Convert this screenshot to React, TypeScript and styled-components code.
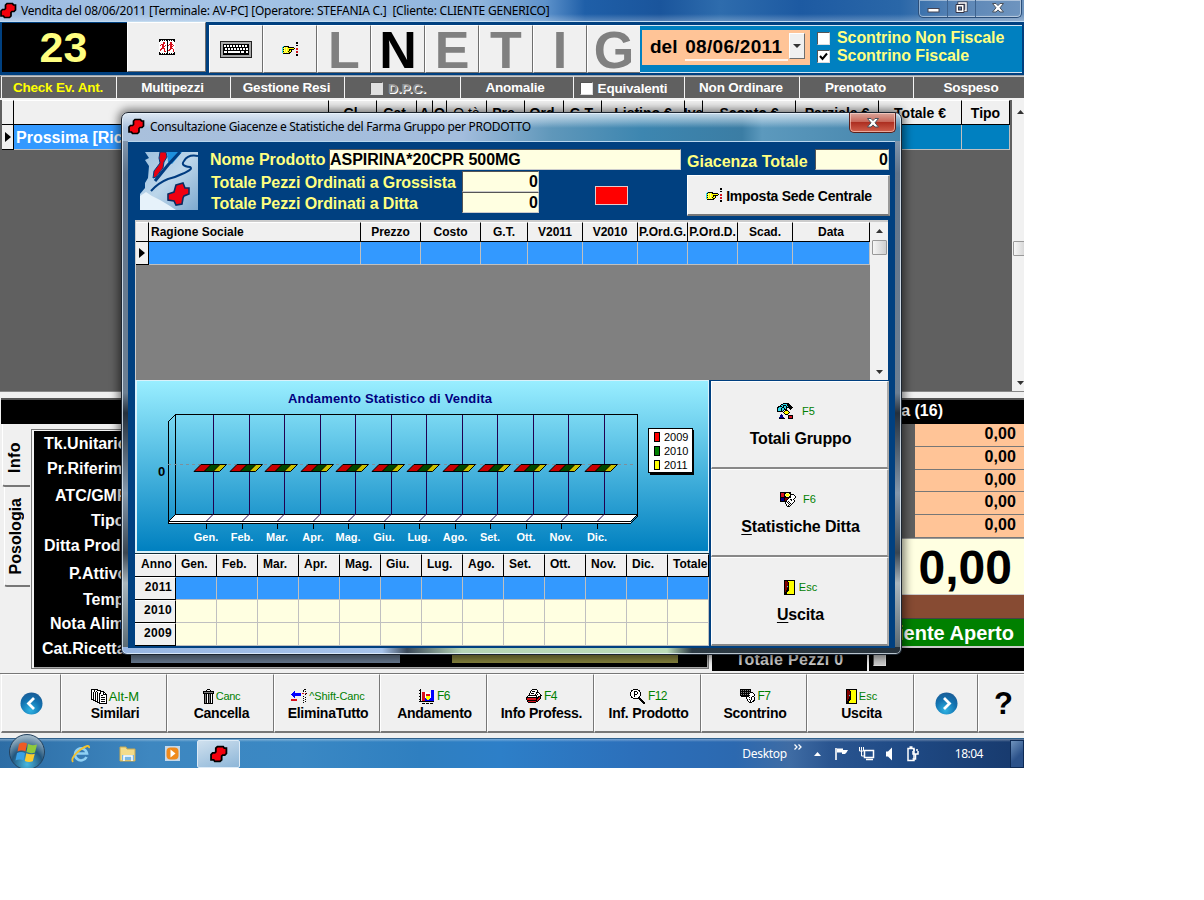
import React from "react";
import styled, { createGlobalStyle, css } from "styled-components";

const Global = createGlobalStyle`
  * { box-sizing: border-box; }
  body { margin: 0; background: #fff; font-family: "Liberation Sans", Arial, sans-serif; }
`;

/* ---------- shared ---------- */
const Text = styled.span<{ $s?: number; $c?: string; $ls?: number; $b?: boolean; $lh?: number }>`
  font-size: ${(p) => p.$s ?? 16}px;
  line-height: ${(p) => p.$lh ?? (p.$s ?? 16) + 2}px;
  color: ${(p) => p.$c ?? "#000"};
  letter-spacing: ${(p) => p.$ls ?? 0}px;
  font-weight: ${(p) => (p.$b === false ? 400 : 700)};
  white-space: pre;
`;
const UiText = styled(Text)`
  font-family: "Noto Sans", "Open Sans", sans-serif;
`;
const Embossed = styled(Text)`
  text-shadow: 1px 1px 0 #fff;
`;
const raised = css`
  background: #f0f0f0;
  border: 1px solid;
  border-color: #fff #6e6e6e #6e6e6e #fff;
`;

const Screen = styled.div`
  position: relative;
  width: 1024px;
  height: 768px;
  overflow: hidden;
  display: flex;
  flex-direction: column;
  background: #f0f0f0;
`;

/* ---------- main title bar ---------- */
const TitleBar = styled.header`
  height: 22px;
  flex: none;
  display: flex;
  align-items: flex-start;
  justify-content: space-between;
  border-bottom: 1px solid #c3dcf0;
  background:
    linear-gradient(180deg, rgba(255,255,255,0) 14px, rgba(255,255,255,.25) 21px),
    linear-gradient(90deg, #9dbbe0 0, #a5c4e6 230px, #8fb4dc 480px, #5d92cb 545px, #1f5fa8 585px, #1a559c 660px, #2e6cad 720px, #1d5aa2 800px, #2a67a8 900px, #5c86b6 960px, #6f95bf 1024px);
`;
const TitleLeft = styled.div`
  display: flex;
  gap: 4px;
  padding: 2px 0 0 0;
  svg { flex: none; }
  span { display: block; padding-top: 2px; }
`;
const WinButtons = styled.div`
  display: flex;
  width: 104px;
  height: 18px;
  margin-right: 2px;
  border: 1px solid #2c4f7a;
  border-top: 0;
  border-radius: 0 0 5px 5px;
  box-shadow: inset 0 0 0 1px rgba(255, 255, 255, 0.45);
`;
const WinButton = styled.div<{ $w: number }>`
  width: ${(p) => p.$w}px;
  display: flex;
  justify-content: center;
  & + & { border-left: 1px solid #3d628e; }
`;

/* ---------- toolbar ---------- */
const Toolbar = styled.div`
  height: 53px;
  flex: none;
  display: flex;
  align-items: flex-start;
  background: #004080;
  padding: 1px 0 0 2px;
`;
const Counter = styled.div`
  width: 125px;
  height: 49px;
  background: #000;
  display: flex;
  justify-content: center;
  align-items: center;
  padding-right: 2px;
`;
const ToolButton = styled.button<{ $w: number; $h?: number; $mt?: number; $ml?: number }>`
  ${raised}
  width: ${(p) => p.$w}px;
  height: ${(p) => p.$h ?? 48}px;
  margin: ${(p) => p.$mt ?? 2}px 0 0 ${(p) => p.$ml ?? 0}px;
  padding: 0;
  display: flex;
  flex: none;
  align-items: center;
  justify-content: center;
  font-family: inherit;
`;
const LetterButton = styled(ToolButton)`
  padding-top: 2px;
`;
const ReceiptPanel = styled.div`
  width: 382px;
  height: 48px;
  margin: 2px 0 0 -1px;
  background: #0080c0;
  border-top: 1px solid #d4e6f2;
  border-bottom: 1px solid #d4e6f2;
  display: flex;
`;
const DateBox = styled.div`
  width: 168px;
  height: 35px;
  margin: 4px 0 0 2px;
  background: #ffc497;
  display: flex;
  padding: 3px 5px 0 8px;
  justify-content: space-between;
`;
const DateValue = styled.div`
  width: 103px;
  margin-left: 7px;
  height: 28px;
  border-bottom: 2px solid #fff3ea;
`;
const ComboArrow = styled.div`
  ${raised}
  width: 16px;
  flex: none;
  height: 26px;
  display: flex;
  align-items: center;
  justify-content: center;
`;
const Checks = styled.div`
  margin: 3px 0 0 7px;
  display: flex;
  flex-direction: column;
`;
const CheckRow = styled.label`
  display: flex;
  height: 18px;
  gap: 7px;
  align-items: center;
`;
const Box = styled.span<{ $bg?: string }>`
  width: 13px;
  height: 13px;
  flex: none;
  display: block;
  background: ${(p) => p.$bg ?? "#fff"};
  border: 1px solid;
  border-color: #555 #ddd #ddd #555;
  svg { display: block; }
`;

/* ---------- filter bar ---------- */
const FilterBar = styled.nav`
  height: 25px;
  flex: none;
  display: flex;
  padding-left: 1px;
  background: #606060;
  border-top: 1px solid #9aa4ae;
  border-bottom: 2px solid #f2f2f2;
`;
const FilterCell = styled.div<{ $w: number; $pt?: number; $pr?: number }>`
  width: ${(p) => p.$w}px;
  flex: none;
  display: flex;
  gap: 5px;
  align-items: center;
  justify-content: center;
  padding-top: ${(p) => p.$pt ?? 0}px;
  padding-right: ${(p) => p.$pr ?? 2}px;
  border-left: 1px solid #f4f4f4;
  border-top: 1px solid #ccc;
`;

/* ---------- sales grid ---------- */
const SalesGrid = styled.section`
  height: 291px;
  flex: none;
  display: flex;
  background: #606060;
  padding-left: 2px;
`;
const SalesBody = styled.div`
  width: 1010px;
  flex: none;
`;
const HeadRow = styled.div<{ $h: number }>`
  display: flex;
  height: ${(p) => p.$h}px;
`;
const HeadCell = styled.div<{ $w: number; $left?: boolean; $pb?: number }>`
  width: ${(p) => p.$w}px;
  flex: none;
  display: flex;
  align-items: center;
  justify-content: ${(p) => (p.$left ? "flex-start" : "center")};
  padding-left: ${(p) => (p.$left ? 2 : 0)}px;
  padding-bottom: ${(p) => p.$pb ?? 0}px;
  background: #f0f0f0;
  border-top: 1px solid #fff;
  border-right: 1px solid #000;
  border-bottom: 1px solid #000;
  overflow: hidden;
`;
const DataCell = styled.div<{ $w: number; $bg: string }>`
  width: ${(p) => p.$w}px;
  flex: none;
  display: flex;
  align-items: center;
  padding: 2px 0 0 2px;
  background: ${(p) => p.$bg};
  border-right: 1px solid #c0c0c0;
  border-bottom: 1px solid #c0c0c0;
  overflow: hidden;
`;
const Marker = styled.div<{ $w: number }>`
  width: ${(p) => p.$w}px;
  flex: none;
  display: flex;
  align-items: center;
  justify-content: center;
  background: #f0f0f0;
  border-right: 1px solid #000;
  border-bottom: 1px solid #000;
`;
const Scroll = styled.div<{ $w: number; $thumb: number; $top?: number }>`
  width: ${(p) => p.$w}px;
  flex: none;
  background: #f1f1f1;
  display: flex;
  flex-direction: column;
  align-items: center;
  justify-content: space-between;
  padding: ${(p) => p.$top ?? 7}px 0 6px;
  svg { display: block; flex: none; }
  i {
    width: 15px;
    height: 15px;
    margin-bottom: auto;
    margin-top: ${(p) => p.$thumb}px;
    border: 1px solid #999;
    border-radius: 1px;
    background: linear-gradient(90deg, #f6f6f6, #cfcfcf);
    flex: none;
  }
`;

/* ---------- lower area ---------- */
const Lower = styled.section`
  height: 282px;
  flex: none;
  display: flex;
  flex-direction: column;
  background: #f0f0f0;
  border-top: 1px solid #888;
`;
const BlackBar = styled.div`
  margin: 6px 0 0 1px;
  height: 26px;
  flex: none;
  background: #000;
  border-top: 2px solid #555;
  display: flex;
  justify-content: flex-end;
  align-items: center;
  padding: 0 81px 2px 0;
`;
const LowerBody = styled.div`
  display: flex;
  height: 248px;
`;
const Tabs = styled.div`
  width: 30px;
  flex: none;
  display: flex;
  flex-direction: column;
  padding-left: 2px;
`;
const Tab = styled.div<{ $h: number; $ml?: number; $pt?: number }>`
  height: ${(p) => p.$h}px;
  margin-left: ${(p) => p.$ml ?? 0}px;
  padding: ${(p) => p.$pt ?? 0}px 3px 0 0;
  display: flex;
  align-items: center;
  justify-content: center;
  border-bottom: 2px solid #777;
  border-left: 1px solid #fff;
  border-radius: 0 0 0 3px;
  span { writing-mode: vertical-rl; transform: rotate(180deg); }
`;
const InfoPanel = styled.div`
  width: 678px;
  height: 240px;
  margin-top: 5px;
  margin-left: 1px;
  background: #000;
  border: 1px solid #777;
  box-shadow: inset 2px 1px 0 #f4f4f4, inset 0 0 0 1px #aaa;
  padding: 1px 0 0;
  display: flex;
  flex-direction: column;
`;
const InfoRow = styled.div<{ $h: number; $x: number }>`
  height: ${(p) => p.$h}px;
  flex: none;
  padding-left: ${(p) => p.$x - 32}px;
  display: flex;
  align-items: center;
`;
const Strips = styled.div`
  display: flex;
  gap: 52px;
  margin-top: -7px;
  padding-left: 99px;
`;
const Strip = styled.div<{ $w: number; $c: string }>`
  width: ${(p) => p.$w}px;
  height: 8px;
  background: ${(p) => p.$c};
`;
const Totals = styled.div`
  flex: 1;
  display: flex;
  flex-direction: column;
  padding-left: 3px;
`;
const Amounts = styled.div`
  height: 114px;
  background: #606060;
  padding-left: 203px;
`;
const Amount = styled.div`
  height: 22.8px;
  background: #ffc497;
  border-bottom: 1px solid #777;
  display: flex;
  justify-content: flex-end;
  padding-right: 8px;
`;
const BigTotal = styled.div`
  height: 56px;
  background: #ffffe1;
  border-top: 1px solid #999;
  display: flex;
  align-items: center;
  justify-content: flex-end;
  padding: 2px 12px 0 0;
`;
const Brown = styled.div`
  height: 25px;
  background: #874b33;
  border-top: 1px solid #ccc;
  border-bottom: 1px solid #444;
`;
const GreenBar = styled.div`
  height: 27px;
  background: #008000;
  display: flex;
  align-items: center;
  justify-content: flex-end;
  padding-right: 10px;
`;
const PiecesBar = styled.div`
  height: 25px;
  display: flex;
  gap: 2px;
  border-top: 2px solid #ccc;
`;
const Pieces = styled.div`
  width: 155px;
  background: #000;
  display: flex;
  justify-content: center;
`;
const PiecesCheck = styled.div`
  flex: 1;
  background: #000;
  padding: 5px 0 0 4px;
`;

/* ---------- bottom command bar ---------- */
const CommandBar = styled.footer`
  height: 66px;
  flex: none;
  display: flex;
  background: #f0f0f0;
  border-top: 1px solid #777;
  border-bottom: 1px solid #30618c;
  padding: 0 0 6px 1px;
`;
const Command = styled.button<{ $w: number }>`
  ${raised}
  border-right: 1px solid #777;
  border-bottom: 2px solid #777;
  width: ${(p) => p.$w}px;
  height: 59px;
  flex: none;
  padding: 13px 0 0 2px;
  display: flex;
  flex-direction: column;
  align-items: center;
  font-family: inherit;
`;
const NavCommand = styled(Command)`
  padding: 0 0 0 1px;
  justify-content: center;
`;
const KeyLine = styled.span`
  display: flex;
  align-items: center;
  height: 16px;
  gap: 2px;
  svg { flex: none; }
`;

/* ---------- task bar ---------- */
const TaskBar = styled.div`
  height: 29px;
  flex: none;
  display: flex;
  align-items: center;
  background:
    linear-gradient(180deg, rgba(255,255,255,.35) 0, rgba(255,255,255,0) 3px),
    linear-gradient(90deg, #2d6da5 0, #3e87c0 150px, #3a88c4 300px, #2f7fc0 420px, #2d7fc8 500px, #2c6fba 640px, #2c69b0 735px, #3f6ca4 790px, #2a5590 830px, #1f4a85 900px, #17396c 1024px);
`;
const Orb = styled.div`
  width: 54px;
  height: 29px;
  display: flex;
  justify-content: center;
  align-items: flex-end;
  svg { flex: none; overflow: visible; }
`;
const TaskIcon = styled.div<{ $w: number }>`
  width: ${(p) => p.$w}px;
  display: flex;
  justify-content: center;
`;
const ActiveTask = styled.div`
  width: 43px;
  height: 28px;
  border: 1px solid #dceaf6;
  border-radius: 2px;
  background: linear-gradient(160deg, #cfe0ee, #8db6d8);
  display: flex;
  align-items: center;
  justify-content: center;
`;
const Tray = styled.div`
  margin-left: auto;
  display: flex;
  align-items: center;
  height: 29px;
`;
const Clock = styled(UiText)`
  margin-left: 28px;
`;
const ShowDesktop = styled.div`
  width: 14px;
  height: 28px;
  margin-left: 27px;
  border: 1px solid #0d2a55;
  background: linear-gradient(135deg, #6f93bd, #2c528a 60%);
`;

/* ---------- dialog ---------- */
const Dialog = styled.div`
  position: absolute;
  left: 121px;
  top: 112px;
  width: 781px;
  height: 543px;
  border: 1px solid #1c2530;
  border-radius: 7px 7px 6px 6px;
  box-shadow: inset 0 0 0 1px rgba(235, 245, 255, 0.75), 0 0 9px 3px rgba(0, 0, 0, 0.5);
  padding: 0 6px 6px;
  display: flex;
  flex-direction: column;
  background:
    linear-gradient(180deg, rgba(235,242,250,.75) 1px, rgba(235,242,250,.35) 9px, rgba(235,242,250,0) 15px) 0 0 / 100% 28px no-repeat,
    linear-gradient(90deg, #a9c0dc 0, #a3bddd 340px, #5f97ba 430px, #3d86b0 520px, #3b7da4 620px, #5c99bd 640px, #4585ac 781px) 0 0 / 100% 28px no-repeat,
    linear-gradient(90deg, #98b6e2 0, #a7c3ea 260px, #3c4a5a 285px, #b5d4b5 340px, #bcdcb8 545px, #2c3a44 570px, #27323b 781px) 0 100% / 100% 7px no-repeat,
    linear-gradient(180deg, #9fb4cc 0, #61748a 60px, #6d7f92 280px, #25303c 300px, #8598ab 380px, #3b4651 440px, #aab6bd 470px, #506069 543px);
`;
const DialogTitle = styled.div`
  height: 28px;
  flex: none;
  display: flex;
  justify-content: space-between;
  margin-right: -1px;
`;
const DialogCaption = styled.div`
  display: flex;
  gap: 5px;
  padding: 5px 0 0 0;
  span { display: block; line-height: 17px; }
`;
const CloseButton = styled.div`
  width: 47px;
  height: 20px;
  border: 1px solid #5c1f1a;
  border-top: 0;
  border-radius: 0 0 5px 5px;
  box-shadow: inset 0 0 0 1px rgba(255, 220, 210, 0.6);
  background: linear-gradient(180deg, #dba79c 0, #c8685a 45%, #ad2f21 50%, #d0604d 100%);
  display: flex;
  align-items: center;
  justify-content: center;
  padding-left: 1px;
`;
const DialogBody = styled.div`
  flex: 1;
  background: #004080;
  border-top: 1px solid #b9d7ee;
  padding: 7px 5px 0 7px;
`;
const ProductHead = styled.div`
  display: flex;
  height: 71px;
`;
const LogoBox = styled.div`
  width: 75px;
  padding: 3px 0 0 5px;
`;
const Fields = styled.div`
  width: 471px;
  display: flex;
  flex-direction: column;
  gap: 1px;
`;
const FieldRow = styled.div<{ $in?: number }>`
  display: flex;
  height: 21px;
  padding-left: ${(p) => p.$in ?? 0}px;
`;
const FieldLabel = styled.div<{ $w: number; $pt: number }>`
  width: ${(p) => p.$w}px;
  flex: none;
  padding-top: ${(p) => p.$pt}px;
`;
const Input = styled.div<{ $w: number; $right?: boolean }>`
  width: ${(p) => p.$w}px;
  height: 21px;
  flex: none;
  display: flex;
  justify-content: ${(p) => (p.$right ? "flex-end" : "flex-start")};
  background: #ffffe1;
  border: 1px solid;
  border-color: #555 #ccc #ccc #555;
  padding: ${(p) => (p.$right ? "1px 0 0" : "1px 0 0")};
`;
const FieldPair = styled.div`
  display: flex;
  height: 43px;
`;
const RedFlag = styled.div`
  width: 33px;
  height: 19px;
  margin: 15px 0 0 56px;
  background: #f00;
  border: 1px solid #e8c8c8;
`;
const Side = styled.div`
  margin-left: 6px;
  width: 203px;
`;
const SideRow = styled.div`
  display: flex;
  height: 26px;
`;
const CentralButton = styled(ToolButton)`
  gap: 4px;
  border-bottom: 2px solid #777;
  border-right: 2px solid #999;
  padding-left: 2px;
  span { padding-top: 2px; }
`;
const StockGrid = styled.div`
  width: 753px;
  height: 160px;
  display: flex;
  background: #808080;
  border-top: 2px solid #ccc;
  border-left: 1px solid #ccc;
`;
const StockBody = styled.div`
  width: 734px;
  flex: none;
  overflow: hidden;
`;
const StockHead = styled(HeadCell)`
  height: 20px;
`;
const Bottom = styled.div`
  display: flex;
`;
const BottomLeft = styled.div`
  width: 576px;
  flex: none;
`;
const ChartFrame = styled.div`
  width: 574px;
  height: 173px;
  padding: 1px 1px 2px 2px;
  background: #d9f1fa;
  svg { display: block; }
`;
const MonthTable = styled.div`
  border-top: 1px solid #12303c;
  width: 574px;
`;
const MonthRow = styled.div<{ $h: number }>`
  display: flex;
  height: ${(p) => p.$h}px;
`;
const YearCell = styled(HeadCell)`
  justify-content: flex-end;
  padding-right: 3px;
`;
const MonthName = styled(Text)`
  padding-left: 3px;
`;
const ActionColumn = styled.div`
  width: 178px;
  padding-top: 1px;
`;
const Action = styled.button<{ $h: number }>`
  ${raised}
  display: flex;
  flex-direction: column;
  align-items: center;
  width: 178px;
  height: ${(p) => p.$h}px;
  border-bottom: 2px solid #888;
  border-right: 2px solid #aaa;
  padding: 19px 0 0 2px;
  gap: 9px;
  font-family: inherit;
  u { text-decoration: underline; text-underline-offset: 2px; text-decoration-thickness: 1px; }
`;
const ActionKey = styled(KeyLine)<{ $gap: number; $pr: number }>`
  height: 20px;
  gap: ${(p) => p.$gap}px;
  padding-right: ${(p) => p.$pr}px;
`;

/* ---------- icons ---------- */
const CrossIcon = ({ s = 17 }: { s?: number }) => (
  <svg width={s} height={s} viewBox="0 0 17 17">
    <path d="M7 1.500h5.500l1 1.500h2v5l-1.500 1.500h-2l-1 1v3.500l-1.500 1.500h-5l-1-1.500h-2.500v-5l1.500-1.500h2l1-1v-3.500z" fill="#f4000c" stroke="#000" strokeWidth="1.700" />
  </svg>
);
/** Draws a small bitmap: every character of a row names a colour of the palette. */
const PALETTE: Record<string, string> = {
  k: "#000", w: "#fff", r: "#d8101c", y: "#ffff00", g: "#808080", b: "#0000ff", c: "#30d8e8",
  m: "#800000", p: "#ffff80", n: "#008000", l: "#c8c8c8", d: "#000080",
};
const Bitmap = ({ rows }: { rows: string[] }) => (
  <svg width={rows[0].length} height={rows.length} shapeRendering="crispEdges">
    {rows.flatMap((r, y) =>
      [...r].map((ch, x) => (PALETTE[ch] ? <rect key={`${x}-${y}`} x={x} y={y} width="1" height="1" fill={PALETTE[ch]} /> : null)),
    )}
  </svg>
);
const EXIT = [
  "kkkkkkkkkkk", "kmmkyyyyyyk", "kmmmkyyyyyk", "kmmmkyyyyyk", "kmmmkyyyyyk", "kmmmkyyyyyk", "kmmckyyyyyk", "kmmmkyyyyyk",
  "kmmkkyyyyyk", "kmmkkyyyyyk", "kmkkkyyyyyk", "kmkkyyyyyyk", "kkkyyyyyyyk", "kkkyyyyyyyk", "kkkkkkkkkkk",
];
const HAND = [
  "..............kk", "..............kk", "................", "..............kk", ".ckkkkk.........", "ckpypykkkkkk....", "cypypyyyyyyyk.rr", "ckpypyykkkkk..rr",
  "cypypyykyk......", "ckpypykyyk....rr", "cyypypykk.....rr", ".kkkkkkk........", "..............kk", "..............kk",
];
const RUN = [
  "kkkkkkkkkkkkkkkk", "kkwkwkwkkwkwkwkk", "kwwwwwwwkwwwwwwk", "wwwwrrwwkwwrrwww", "wwwwrrwwkwwrrwww", "wwrrrwwwkwrrrrww", "wrwrrwrwkrwrrwrw", "wwwrrrwwkwwrrrww",
  "wwwrrwwwkwwrrwww", "wwrrrrwwkwwrrrww", "wrrwwrwwkwrrwwrw", "wrwwwrwwkrrwwwrw", "wwwwwrrwkwwwwwrw", "kwwwwwwwkwwwwwwk", "kkwkwkwkkwkwkwkk", "kkkkkkkkkkkkkkkk",
];
const PAGES = [
  "kkkkkkk.........", "kwwkwwkkkk......", "kwwkwkwwwkkkk...", "kwkwkwkwwkwwkk..", "kwkwkwkwkkwwkwk.", "kwkwkwkwkwwwkkkk", "kwkwkwkwkwkkwwwk", "kwkwkwkwkwwwwwwk",
  "kwkwkwkwkwkkkkwk", "kwkwkwkwkwwwwwwk", "kkkwkwkwkwkkkkwk", "..kkkwkwkwwwwwwk", "....kkkwkwkkkkwk", "......kkkwwwwwwk", "........kkkkkkkk",
];
const TRASH = [
  "....kkk....", "...k...k...", "kkkkkkkkkkk", "kgggggggggk", "kkkkkkkkkkk", ".kgkwkgkwk.", ".kgkwkgkwk.", ".kgkwkgkwk.", ".kgkwkgkwk.",
  ".kgkwkgkwk.", ".kgkwkgkwk.", ".kgkwkgkwk.", ".kgkwkgkwk.", ".kgkwkgkwk.", ".kkkkkkkkk.",
];
const ARROW = [
  ".............kk.", "............k...", "...b........k.k.", "..bb............", ".bbbbbbbbb.rr.rk", "bbbbbbbbbb....k.", ".bbbbbbbbb......", "..bb........k...",
  "...b..........k.", "............k...", "rrrrrr........k.", "rrrrrr......k...", "..............k.", "............k...",
];
const CHART = [
  ".k..............", "kk..........bbb.", ".k..........bbb.", ".k.rrrwwww..bbb.", "kk.rrrwwwwwwbbb.", ".k.rrrwrrrrwbbb.", ".k.rrrwrrrrwbbb.", "kk.rrrwyyyywbbb.",
  ".k.rrrwyyyywbbb.", ".k.rrrbyyyybbbb.", "kk.rrrbbyybbbbb.", ".k.rrrbbbbbbbbb.", "kkkkkkkkkkkkkkk.", "................", "...kkk.kkk.kkk..",
];
const PRINTER = [
  "......kkkkk.....", ".....kwwwwwk....", "....kwkkkwwk....", "....kwwwwwkkk...", "...kwkkkwwkwwk..", "...kwwwwwkwkwwk.", "..kkkkkkkkkwwwkk", ".kwwwwwwwwkwkkk.",
  "kkkkkkkkkkkkkrk.", "krrrrrrrrrkkrrk.", "krrrrrrrrrkrrk..", ".kkkkkkkkkkrk...", ".krrrrrrrrkk....", "..kkkkkkkk......",
];
const MAGNIFY = [
  "...kkkkk........", ".kkwwwwwkk......", ".kwwkkkwwk......", "kwwwkwwkwwk.....", "kwwwkwwkwwk.....", "kwwwkkkwwwk.....", "kwwwkwwwwwk.....", ".kwwkwwwwk......",
  ".kkwwwwwkk......", "...kkkkkkkk.....", ".........kkk....", "..........kkk...", "...........kkk..", "............kkk.", ".............kk.",
];
const RECEIPT = [
  "kkkkkkkkkkk.....", "kgkgkgkgkgk.....", "kkkkkkkkkkk.....", "kgkgkgkgkgkkk...", "kkkkkkkkkkwwwk..", "kgkgkgkgkwwwwwk.", "kkkkkkkkkkwwwwk.", ".kkkkkkkkwwwkk..",
  "..wwwwkwwkwkwwk.", "......kwwwwkwwk.", ".......kwkwkwwk.", ".......kwwkwwkk.", "........kwkwkk..", ".........kkk....",
];
const GROUP = [
  "......kkkkkk....", "....kkcccckkk...", "...kcckkkckkkk..", ".kkkkckcckckkkk.", "kkccckkcckkkkkkk", "kccckcckck..kkk.", "kccckcckkk...k..", "kccckck.kkk.....",
  "kkkkkk.kyyyk....", "......kyyyyyk...", ".......kyyyk....", "....d...kkk.....", "...ddd.....kkkkk", "...ddd.....krrrk", "..ddddd....krrrk", "..kkkkkk...kkkkk",
];
const COMPANY = [
  "kkkkkkkkkkk.....", "krrrkkpppkk.....", "krrrkpyyypkkkk..", "krrrkpyyypkwwwk.", "krrrkkpppkkwwwwk", "kkkkkkkkkkkwwwwk", "kdddkmmmkwwwwwk.", "kdddkmmkwwkkwk..",
  "kdddkmkwwwwkwwk.", "kkkkkkkwkwwwwwk.", ".....kwkwkwwwk..", ".....kwwkwkwk...", "......kwwkwk....", "......kwkwk.....", ".......kkk......",
];
const Keyboard = () => (
  <svg width="32" height="17" viewBox="0 0 32 17" shapeRendering="crispEdges">
    <rect width="32" height="17" rx="1" fill="#222" />
    <rect x="1" y="1" width="30" height="15" fill="#a8a8a8" />
    <rect x="3" y="3" width="26" height="11" fill="#000" />
    <g fill="#fff">
      {[0, 1, 2, 3, 4, 5, 6, 7].map((i) => <rect key={i} x={4 + i * 3} y="4" width="2" height="2" />)}
      {[0, 1, 2, 3, 4, 5, 6].map((i) => <rect key={i} x={5 + i * 3} y="7" width="2" height="2" />)}
      <rect x="4" y="10" width="3" height="2" /><rect x="8" y="10" width="12" height="2" /><rect x="21" y="10" width="3" height="2" />
      <rect x="26" y="7" width="2" height="2" /><rect x="26" y="10" width="2" height="2" />
    </g>
  </svg>
);
const CloseX = () => (
  <svg width="14" height="12" viewBox="0 0 14 12">
    <path d="M1.500 1.500h3.500L7 3.600l2-2.100h3.500L9 5.800l3.500 4.200h-3.500L7 7.900 5 10h-3.500l3.500-4.200z" fill="#fff" stroke="#49515c" strokeWidth="1" />
  </svg>
);
const Triangle = ({ d = "down", w = 7 }: { d?: "down" | "up" | "right"; w?: number }) =>
  d === "right" ? (
    <svg width="6" height="10"><path d="M0 0L6 5L0 10z" fill="#000" /></svg>
  ) : (
    <svg width={w} height="4"><path d={d === "down" ? `M0 0H${w}L${w / 2} 4z` : `M0 4H${w}L${w / 2} 0z`} fill="#333" /></svg>
  );
const RoundArrow = ({ flip }: { flip?: boolean }) => (
  <svg width="23" height="23" viewBox="0 0 23 23">
    <defs>
      <radialGradient id={flip ? "ra1" : "ra2"} cx=".45" cy=".8" r=".8">
        <stop offset="0" stopColor="#2fb4e4" /><stop offset=".6" stopColor="#1272b0" /><stop offset="1" stopColor="#1a5c96" />
      </radialGradient>
    </defs>
    <circle cx="11.500" cy="11.500" r="11" fill={`url(#${flip ? "ra1" : "ra2"})`} />
    <path d={flip ? "M9 6l5.500 5.500L9 17" : "M14 6l-5.500 5.500L14 17"} fill="none" stroke="#fff" strokeWidth="2.800" />
  </svg>
);
const Logo = () => (
  <svg width="58" height="58" viewBox="0 0 58 58">
    <defs>
      <linearGradient id="lg" x1="0" y1="0" x2="1" y2="1">
        <stop offset="0" stopColor="#9cc0de" /><stop offset=".5" stopColor="#bcd6ea" /><stop offset="1" stopColor="#7ea9cf" />
      </linearGradient>
    </defs>
    <path d="M5 0H58V58H0V42L5 36L5 31L8 26L9 14L5 8L9 6z" fill="url(#lg)" />
    <path d="M0 44L6 40L12 44L20 48L30 54L36 58H0z" fill="#e6f2fa" />
    <path d="M27 0L42 0L32 12L28 10z" fill="#1d8fdc" />
    <path d="M58 4Q48 2 44 9Q40 14 50 15Q54 17 42 22Q36 25 28 27Q18 31 11 39" fill="none" stroke="#003c80" strokeWidth="2" />
    <path d="M40 0L28 13L15 29" fill="none" stroke="#003c80" strokeWidth="3" />
    <path d="M20 0h6l1 5-3 5-1 6-7 9-3 1 1-7 6-8-1-5z" fill="#e80010" stroke="#003c80" strokeWidth="1" />
    <path d="M36 33l7-2 2 5 4 0 0 6-5 2-1 2-1 6-6 1-2-4-6-1 0-6 6-2z" fill="#f00010" stroke="#0a2c60" strokeWidth="1.600" />
  </svg>
);

/* ---------- statistics chart ---------- */
const MONTHS = ["Gen.", "Feb.", "Mar.", "Apr.", "Mag.", "Giu.", "Lug.", "Ago.", "Set.", "Ott.", "Nov.", "Dic."];
const ChartLabel = styled.text`
  font: bold 11px "Liberation Sans", sans-serif;
  fill: #fff;
`;
const ChartTitle = styled.text`
  font: bold 13px "Liberation Sans", sans-serif;
  fill: #000080;
`;
const AxisLabel = styled(ChartTitle)`
  fill: #000;
`;
const LegendLabel = styled.text`
  font: 11px "Liberation Sans", sans-serif;
  fill: #000;
`;
const StatsChart = () => (
  <svg width="571" height="170" viewBox="137 381 571 170">
    <defs>
      <linearGradient id="sky" x1="0" y1="0" x2="0" y2="1">
        <stop offset="0" stopColor="#99eeff" /><stop offset="1" stopColor="#0080c0" />
      </linearGradient>
    </defs>
    <rect x="137" y="381" width="571" height="170" fill="url(#sky)" />
    <ChartTitle x="288" y="403" textLength="204">Andamento Statistico di Vendita</ChartTitle>
    <g fill="none" stroke="#000" shapeRendering="crispEdges">
      <path d="M175.500 414.500H637.500V515.500M175.500 414.500V515M168.500 421V523.500M168.500 421.500L175.500 414.500" />
      <path d="M168.500 521.500L175.500 514.500H637.500L630.500 521.500z" fill="#fff" />
      <path d="M168.500 523.500H630.500L637.500 516.500" />
    </g>
    <path d="M169 522.500H631" stroke="#fff" />
    <path d="M168 464.500H634" stroke="#7d8f9b" strokeDasharray="3 3" />
    {MONTHS.map((m, i) => {
      const x = Math.round(213.300 + i * 35.500);
      return (
        <g key={m}>
          <path d={`M${x + 0.5} 415V514L${x - 6.5} 521`} fill="none" stroke="#200050" />
          <path d={`M${x - 6.5} 524V529`} stroke="#000" />
          <g stroke="#000" strokeWidth="1">
            <path d={`M${x - 19} 471.500l7-7h11l-7 7z`} fill="#c80000" />
            <path d={`M${x - 9} 471.500l7-7h10l-7 7z`} fill="#004800" />
            <path d={`M${x} 471.500l7-7h6.500l-7 7z`} fill="#c8c000" />
          </g>
          <ChartLabel x={x - 7} y="541" textAnchor="middle">{m}</ChartLabel>
        </g>
      );
    })}
    <AxisLabel x="158" y="476">0</AxisLabel>
    <rect x="650" y="430" width="44" height="45" fill="#000" />
    <rect x="648.500" y="428.500" width="44" height="44" fill="#fff" stroke="#000" />
    {["2009", "2010", "2011"].map((y, i) => (
      <g key={y}>
        <rect x="654.500" y={432.500 + i * 14} width="5" height="9" fill={["#f00", "#008000", "#ff0"][i]} stroke="#000" />
        <LegendLabel x="664" y={441 + i * 14}>{y}</LegendLabel>
      </g>
    ))}
  </svg>
);

/* ---------- data ---------- */
const FILTERS: { t: string; w: number; box?: string; pr?: number }[] = [
  { t: "Check Ev. Ant.", w: 115 }, { t: "Multipezzi", w: 114 }, { t: "Gestione Resi", w: 114 }, { t: "D.P.C.", w: 116, box: "#e0e0e0", pr: 9 },
  { t: "Anomalie", w: 113, pr: 4 }, { t: "Equivalenti", w: 111, box: "#fff", pr: 11 }, { t: "Non Ordinare", w: 115 }, { t: "Prenotato", w: 114 },
  { t: "Sospeso", w: 115, pr: 0 },
];
const SALES: [string, number][] = [
  ["", 315], ["Cl.", 48], ["Cat.", 40], ["A", 16], ["O", 14], ["Q.tà", 40], ["Pre.", 38], ["Ord.", 39], ["G.T.", 38],
  ["Listino €", 83], ["Iva", 18], ["Sconto €", 93], ["Parziale €", 83], ["Totale €", 83], ["Tipo", 48],
];
const STOCK: [string, number][] = [
  ["Ragione Sociale", 212], ["Prezzo", 60], ["Costo", 60], ["G.T.", 47], ["V2011", 55], ["V2010", 55], ["P.Ord.G.", 50],
  ["P.Ord.D.", 50], ["Scad.", 55], ["Data", 77],
];
const INFO: [string, number, number][] = [
  ["Tk.Unitario", 44, 25], ["Pr.Riferim.", 47, 25], ["ATC/GMP", 55, 29], ["Tipo", 91, 21], ["Ditta Prod.", 44, 29],
  ["P.Attivo", 69, 27], ["Tempo", 83, 25], ["Nota Alim.", 50, 23], ["Cat.Ricetta", 42, 27],
];
type Cmd = { t: string; k: string; icon: string[]; w: number; s: number; ls?: number };
const COMMANDS: Cmd[] = [
  { t: "Similari", k: "Alt-M", icon: PAGES, w: 106, s: 13 },
  { t: "Cancella", k: "Canc", icon: TRASH, w: 107, s: 11, ls: -0.3 },
  { t: "EliminaTutto", k: "^Shift-Canc", icon: ARROW, w: 106, s: 11, ls: -0.1 },
  { t: "Andamento", k: "F6", icon: CHART, w: 107, s: 12, ls: -0.6 },
  { t: "Info Profess.", k: "F4", icon: PRINTER, w: 107, s: 12, ls: -0.6 },
  { t: "Inf. Prodotto", k: "F12", icon: MAGNIFY, w: 107, s: 12, ls: -0.6 },
  { t: "Scontrino", k: "F7", icon: RECEIPT, w: 106, s: 12, ls: -0.6 },
  { t: "Uscita", k: "Esc", icon: EXIT, w: 107, s: 11 },
];
const KEY = "#008000";

export default function App() {
  return (
    <Screen>
      <Global />
      <TitleBar>
        <TitleLeft>
          <CrossIcon />
          <UiText $s={12} $b={false} $ls={-0.22}>Vendita del 08/06/2011 [Terminale: AV-PC] [Operatore: STEFANIA C.]  [Cliente: CLIENTE GENERICO]</UiText>
        </TitleLeft>
        <WinButtons>
          <WinButton $w={29}><svg width="13" height="17"><rect x="1" y="8.500" width="11" height="3.500" fill="#fff" stroke="#445" /></svg></WinButton>
          <WinButton $w={28}>
            <svg width="13" height="17">
              <path d="M4 3h7v7.500h-7z" fill="none" stroke="#334" strokeWidth="3" /><path d="M4 3h7v7.500h-7z" fill="none" stroke="#fff" strokeWidth="1.500" />
              <path d="M1 4.500h8v8h-8z" fill="#fff" stroke="#334" /><rect x="3.500" y="7" width="3" height="3" fill="#5a7ca4" stroke="#334" />
            </svg>
          </WinButton>
          <WinButton $w={47}><svg width="14" height="17" viewBox="0 -2 14 17"><CloseX /></svg></WinButton>
        </WinButtons>
      </TitleBar>

      <Toolbar>
        <Counter><Text $s={43} $c="#ffff80">23</Text></Counter>
        <ToolButton $w={79} $h={50} $mt={-1}><Bitmap rows={RUN} /></ToolButton>
        <ToolButton $w={54} $ml={3}><Keyboard /></ToolButton>
        <ToolButton $w={54}><Bitmap rows={HAND} /></ToolButton>
        {[..."LNETIG"].map((l) => (
          <LetterButton key={l} $w={54}><Text $s={52} $lh={42} $c={l === "N" ? "#000" : "#808080"}>{l}</Text></LetterButton>
        ))}
        <ReceiptPanel>
          <DateBox>
            <Text $s={19} $lh={27}>del</Text>
            <DateValue><Text $s={19} $lh={27} $ls={0.3}>08/06/2011</Text></DateValue>
            <ComboArrow><Triangle w={8} /></ComboArrow>
          </DateBox>
          <Checks>
            <CheckRow><Box /><Text $ls={-0.08} $c="#ffff80">Scontrino Non Fiscale</Text></CheckRow>
            <CheckRow>
              <Box><svg width="11" height="11"><path d="M2 5l2.500 3L9 2.500" fill="none" stroke="#000" strokeWidth="2" /></svg></Box>
              <Text $ls={-0.08} $c="#ffff80">Scontrino Fiscale</Text>
            </CheckRow>
          </Checks>
        </ReceiptPanel>
      </Toolbar>

      <FilterBar>
        {FILTERS.map(({ t, w, box, pr }, i) => (
          <FilterCell key={t} $w={w} $pt={box ? 2 : 0} $pr={pr}>
            {box && <Box $bg={box} />}
            {i === 3 ? (
              <Embossed $s={13.5} $ls={0} $c="#909090">{t}</Embossed>
            ) : (
              <Text $s={13.5} $ls={-0.2} $c={i === 0 ? "#ffff00" : "#fff"}>{t}</Text>
            )}
          </FilterCell>
        ))}
      </FilterBar>

      <SalesGrid>
        <SalesBody>
          <HeadRow $h={25}>
            <HeadCell $w={12} />
            {SALES.map(([t, w], i) => <HeadCell key={i} $w={w}><Text $s={14} $b={t !== "Q.tà"}>{t}</Text></HeadCell>)}
          </HeadRow>
          <HeadRow $h={25}>
            <Marker $w={12}><Triangle d="right" /></Marker>
            {SALES.map(([t, w], i) => (
              <DataCell key={i} $w={w} $bg={i === 0 ? "#3399ff" : "#0080c0"}>{i === 0 && <Text $c="#fff">Prossima [Ricetta]</Text>}</DataCell>
            ))}
          </HeadRow>
        </SalesBody>
        <Scroll $w={16} $thumb={127} $top={10}><Triangle d="up" /><i /><Triangle /></Scroll>
      </SalesGrid>

      <Lower>
        <BlackBar><Text $c="#fff">Vendita (16)</Text></BlackBar>
        <LowerBody>
          <Tabs>
            <Tab $h={63} $pt={5}><Text $ls={0.4}>Info</Text></Tab>
            <Tab $h={100} $ml={2}><Text>Posologia</Text></Tab>
          </Tabs>
          <InfoPanel>
            {INFO.map(([t, x, h]) => <InfoRow key={t} $x={x} $h={h}><Text $c="#fff">{t}</Text></InfoRow>)}
            <Strips><Strip $w={269} $c="#66788f" /><Strip $w={226} $c="#85823c" /></Strips>
          </InfoPanel>
          <Totals>
            <Amounts>{[0, 1, 2, 3, 4].map((i) => <Amount key={i}><Text $lh={19} $ls={0.1}>0,00</Text></Amount>)}</Amounts>
            <BigTotal><Text $s={48}>0,00</Text></BigTotal>
            <Brown />
            <GreenBar><Text $s={20} $c="#fff">Cliente Aperto</Text></GreenBar>
            <PiecesBar>
              <Pieces><Text $c="#ccc" $lh={23} $ls={0.3}>Totale Pezzi 0</Text></Pieces>
              <PiecesCheck><Box $bg="#ccc" /></PiecesCheck>
            </PiecesBar>
          </Totals>
        </LowerBody>
      </Lower>

      <CommandBar>
        <NavCommand $w={60}><RoundArrow /></NavCommand>
        {COMMANDS.map(({ t, k, icon, w, s, ls }) => (
          <Command key={t} $w={w}>
            <KeyLine><Bitmap rows={icon} /><Text $s={s} $ls={ls} $b={false} $c={KEY}>{k}</Text></KeyLine>
            <Text $s={14} $ls={-0.25} $lh={18}>{t}</Text>
          </Command>
        ))}
        <NavCommand $w={64}><RoundArrow flip /></NavCommand>
        <NavCommand $w={50}><Text $s={31}>?</Text></NavCommand>
      </CommandBar>

      <TaskBar>
        <Orb>
          <svg width="36" height="34" viewBox="0 0 36 34">
            <defs><radialGradient id="orb" cx=".5" cy=".85" r=".8"><stop offset="0" stopColor="#48b8e0" /><stop offset=".55" stopColor="#22567e" /><stop offset="1" stopColor="#9fb6c6" /></radialGradient></defs>
            <circle cx="18" cy="18" r="17.500" fill="url(#orb)" stroke="#24425e" />
            <path d="M10 10q4-2.500 8-.5l-1.500 8q-4-2-8 0z" fill="#ee5a24" />
            <path d="M19 10q4 2 9 .500l-2 8q-4 1.500-8.500-.500z" fill="#8fc93c" />
            <path d="M8 19q4-2 8 0l-1.500 7.500q-4-2-8 0z" fill="#39a0e6" />
            <path d="M17.300 19.200q4 2 8.500.5l-2 7.500q-4 1.800-8-.3z" fill="#fdcb2e" />
          </svg>
        </Orb>
        <TaskIcon $w={54}>
          <svg width="20" height="20" viewBox="0 0 20 20"><path d="M15.500 13a6 6 0 1 1 .5-3.500H5" fill="none" stroke="#8fd0f4" strokeWidth="2.600" /><path d="M2 18Q-1 14 9 6Q19-1 18 4" fill="none" stroke="#f2c230" strokeWidth="1.800" /></svg>
        </TaskIcon>
        <TaskIcon $w={39}>
          <svg width="18" height="16" viewBox="0 0 18 16"><path d="M1 1h6l1 2h8v12H1z" fill="#f3dc8a" stroke="#c7a952" /><path d="M3 9h12v5H3z" fill="#79b8e4" /><path d="M5 15v-5h8v5" fill="none" stroke="#fff" strokeWidth="1.500" /></svg>
        </TaskIcon>
        <TaskIcon $w={50}>
          <svg width="15" height="15" viewBox="0 0 15 15"><rect width="15" height="15" fill="#c6d8e8" /><rect x="1.500" y="1.500" width="12" height="12" rx="4" fill="#f08a1c" /><path d="M5.500 3.500l5 4-5 4z" fill="#fff" /></svg>
        </TaskIcon>
        <ActiveTask><CrossIcon s={18} /></ActiveTask>
        <Tray>
          <UiText $s={12} $b={false} $c="#fff" $ls={-0.3}>Desktop</UiText>
          <svg width="67" height="29" viewBox="0 0 67 29" fill="none" stroke="#fff">
            <path d="M7.500 5.500l2.500 2.500-2.500 2.500M11.500 5.500l2.500 2.500-2.500 2.500" strokeWidth="1.300" />
            <path d="M27 17h7l-3.500-4z" fill="#fff" stroke="none" />
            <path d="M49 9v12" strokeWidth="1.600" /><path d="M50 9.500h6v1.500h5l-1.500 2.500-1.500 1.500h-3v-1.500h-5z" fill="#fff" stroke="none" />
          </svg>
          <svg width="73" height="29" viewBox="0 0 73 29" fill="none" stroke="#fff">
            <path d="M10.500 11.500h9v7h-9z M12 20.500h7" strokeWidth="1.500" /><path d="M7.500 8v9M5.500 8v4h4V8M7.500 17h3" />
            <path d="M32 12.500v5h2l4 4v-13l-4 4z" fill="#fff" stroke="none" />
            <path d="M54 9.500h6v12h-6z M55.500 8h3" strokeWidth="1.500" /><path d="M59 12v3h5v-3M60 10v2M63 10v2M61.500 15v5h-3" strokeWidth="1.500" />
          </svg>
          <Clock $s={12} $b={false} $c="#fff" $ls={-0.5}>18:04</Clock>
          <ShowDesktop />
        </Tray>
      </TaskBar>

      <Dialog>
        <DialogTitle>
          <DialogCaption>
            <CrossIcon s={17} />
            <UiText $s={12} $b={false} $ls={-0.3}>Consultazione Giacenze e Statistiche del Farma Gruppo per PRODOTTO</UiText>
          </DialogCaption>
          <CloseButton><CloseX /></CloseButton>
        </DialogTitle>
        <DialogBody>
          <ProductHead>
            <LogoBox><Logo /></LogoBox>
            <Fields>
              <FieldRow>
                <FieldLabel $w={119} $pt={2}><Text $c="#ffff80">Nome Prodotto</Text></FieldLabel>
                <Input $w={352}><Text $ls={-0.02}>ASPIRINA*20CPR 500MG</Text></Input>
              </FieldRow>
              <FieldPair>
                <div>
                  {["Totale Pezzi Ordinati a Grossista", "Totale Pezzi Ordinati a Ditta"].map((t) => (
                    <FieldRow key={t} $in={1}>
                      <FieldLabel $w={251} $pt={3}><Text $ls={-0.09} $c="#ffff80">{t}</Text></FieldLabel>
                      <Input $w={77} $right><Text>0</Text></Input>
                    </FieldRow>
                  ))}
                </div>
                <RedFlag />
              </FieldPair>
            </Fields>
            <Side>
              <SideRow>
                <FieldLabel $w={128} $pt={4}><Text $c="#ffff80">Giacenza Totale</Text></FieldLabel>
                <Input $w={74} $right><Text>0</Text></Input>
              </SideRow>
              <CentralButton $w={203} $h={41} $mt={0}><Bitmap rows={HAND} /><Text $s={14} $ls={-0.25}>Imposta Sede Centrale</Text></CentralButton>
            </Side>
          </ProductHead>
          <StockGrid>
            <StockBody>
              <HeadRow $h={20}>
                <StockHead $w={13} />
                {STOCK.map(([t, w], i) => <StockHead key={t} $w={w} $left={i === 0}><Text $s={12}>{t}</Text></StockHead>)}
              </HeadRow>
              <HeadRow $h={23}>
                <Marker $w={13}><Triangle d="right" /></Marker>
                {STOCK.map(([t, w]) => <DataCell key={t} $w={w} $bg="#3399ff" />)}
              </HeadRow>
            </StockBody>
            <Scroll $w={18} $thumb={7}><Triangle d="up" /><i /><Triangle /></Scroll>
          </StockGrid>
          <Bottom>
            <BottomLeft>
              <ChartFrame><StatsChart /></ChartFrame>
              <MonthTable>
                <MonthRow $h={23}>
                  <YearCell $w={41} $pb={3}><Text $s={12} $ls={0.1}>Anno</Text></YearCell>
                  {[...MONTHS, "Totale"].map((m) => <HeadCell key={m} $w={41} $left $pb={3}><MonthName $s={12}>{m}</MonthName></HeadCell>)}
                </MonthRow>
                {["2011", "2010", "2009"].map((y, i) => (
                  <MonthRow key={y} $h={23}>
                    <YearCell $w={41} $pb={3}><Text $s={12} $ls={0.3}>{y}</Text></YearCell>
                    {[...MONTHS, "Totale"].map((m) => <DataCell key={m} $w={41} $bg={i === 0 ? "#3399ff" : "#ffffe1"} />)}
                  </MonthRow>
                ))}
              </MonthTable>
            </BottomLeft>
            <ActionColumn>
              <Action $h={88}>
                <ActionKey $gap={9} $pr={9}><Bitmap rows={GROUP} /><Text $s={11} $b={false} $c={KEY}>F5</Text></ActionKey>
                <Text $ls={-0.15}>Totali Gruppo</Text>
              </Action>
              <Action $h={88}>
                <ActionKey $gap={7} $pr={5}><Bitmap rows={COMPANY} /><Text $s={11} $b={false} $c={KEY}>F6</Text></ActionKey>
                <Text $ls={-0.15}><u>S</u>tatistiche Ditta</Text>
              </Action>
              <Action $h={89}>
                <ActionKey $gap={4} $pr={0}><Bitmap rows={EXIT} /><Text $s={11} $b={false} $c={KEY}>Esc</Text></ActionKey>
                <Text $ls={-0.15}><u>U</u>scita</Text>
              </Action>
            </ActionColumn>
          </Bottom>
        </DialogBody>
      </Dialog>
    </Screen>
  );
}
